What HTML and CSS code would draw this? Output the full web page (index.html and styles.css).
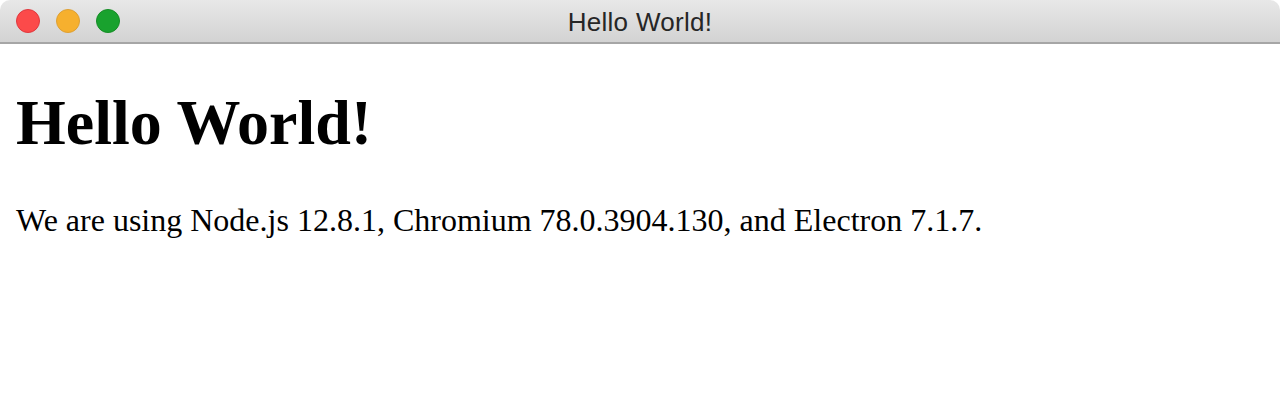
FILE: index.html
```html
<!DOCTYPE html>
<html>
<head>
<meta charset="utf-8">
<title>Hello World!</title>
<link rel="stylesheet" href="styles.css">
</head>
<body>
<div class="window">
  <div class="titlebar">
    <div class="lights">
      <span class="light red"></span>
      <span class="light yellow"></span>
      <span class="light green"></span>
    </div>
    <div class="title">Hello World!</div>
  </div>
  <div class="content">
    <h1 class="heading">Hello World!</h1>
    <p class="text">We are using Node.js 12.8.1, Chromium 78.0.3904.130, and Electron 7.1.7.</p>
  </div>
</div>
</body>
</html>
```
FILE: styles.css
```css
html, body {
  margin: 0;
  padding: 0;
  background: #ffffff;
}
.window {
  width: 1280px;
  height: 402px;
  overflow: hidden;
  display: flex;
  flex-direction: column;
}
.titlebar {
  position: relative;
  height: 42px;
  flex: 0 0 42px;
  background: linear-gradient(#e8e8e8, #d3d3d3);
  border-bottom: 2px solid #a6a6a6;
  border-radius: 10px 10px 0 0;
  display: flex;
  align-items: center;
  justify-content: center;
}
.lights {
  position: absolute;
  left: 16px;
  top: 9px;
  display: flex;
  gap: 16px;
}
.light {
  width: 22px;
  height: 22px;
  border-radius: 50%;
  display: block;
}
.red { background: #fc4a4a; border: 1px solid #e0383e; }
.yellow { background: #f6b02e; border: 1px solid #dea034; }
.green { background: #19a22e; border: 1px solid #168d26; }
.title {
  font-family: "Liberation Sans", Arial, sans-serif;
  font-size: 26px;
  letter-spacing: 0.3px;
  color: #262626;
  padding-top: 2px;
}
.content {
  padding: 0 16px;
  font-family: "Liberation Serif", "Times New Roman", serif;
  color: #000;
}
.heading {
  font-size: 64px;
  font-weight: bold;
  margin: 42px 0 0;
}
.text {
  font-size: 32px;
  margin: 42px 0 0;
}
```
